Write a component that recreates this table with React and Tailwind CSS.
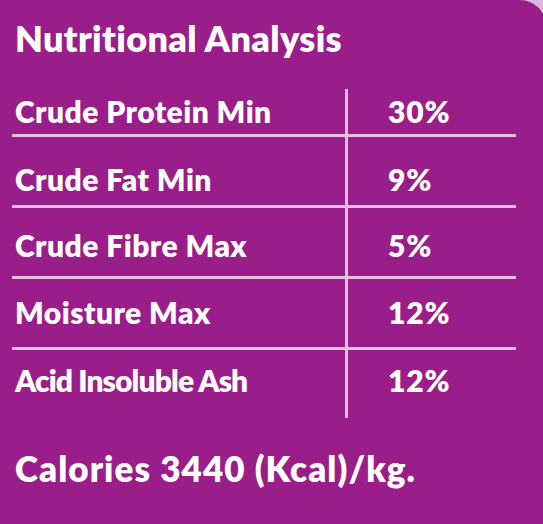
import React from "react";

const rows = [
  { label: "Crude Protein Min", value: "30%", h: "h-[48px]", pt: "pt-[7px]", border: true, track: "tracking-[0.45px]" },
  { label: "Crude Fat Min", value: "9%", h: "h-[71px]", pt: "pt-[27px]", border: true, track: "tracking-[0.45px]" },
  { label: "Crude Fibre Max", value: "5%", h: "h-[71px]", pt: "pt-[22px]", border: true, track: "tracking-[0.45px]" },
  { label: "Moisture Max", value: "12%", h: "h-[71px]", pt: "pt-[18px]", border: true, track: "tracking-[0.45px]" },
  { label: "Acid Insoluble Ash", value: "12%", h: "h-[68px]", pt: "pt-[15px]", border: false, track: "tracking-[-0.9px]" },
];

export default function App() {
  return (
    <div className="w-[543px] h-[524px] overflow-hidden bg-[#d9b8d9]" style={{ fontFamily: "Lato, 'Open Sans', sans-serif" }}>
      <div className="h-full w-[546px] bg-[#9a1e8a] rounded-tr-[26px] text-white font-extrabold">
        <h1 className="pt-[20px] pl-[15px] text-[36px] leading-[36px] tracking-[0.35px] font-extrabold">
          Nutritional Analysis
        </h1>
        <div className="mt-[33px] ml-[12px] w-[504px]">
          {rows.map((r, i) => (
            <div
              key={i}
              className={`flex box-border ${r.h} ${r.border ? "border-b-[3px] border-[#e4c0e1]" : ""}`}
            >
              <div className={`w-[333px] pl-[3px] ${r.pt} text-[30px] leading-[30px] ${r.track}`}>
                {r.label}
              </div>
              <div className="w-[3px] bg-[#e4c0e1]" />
              <div className={`flex-1 pl-[40px] ${r.pt} text-[30px] leading-[30px] tracking-[0.8px]`}>
                {r.value}
              </div>
            </div>
          ))}
        </div>
        <div className="mt-[33px] pl-[15px] text-[35px] leading-[35px] tracking-[1.05px]">
          Calories 3440 (Kcal)/kg.
        </div>
      </div>
    </div>
  );
}
